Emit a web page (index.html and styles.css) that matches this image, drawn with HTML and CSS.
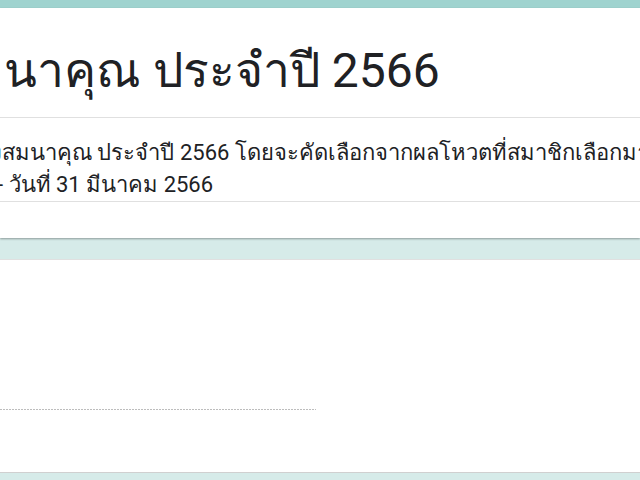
FILE: index.html
```
<!DOCTYPE html>
<html lang="th">
<head>
    <meta charset="UTF-8">
    <meta name="viewport" content="width=device-width, initial-scale=1.0">
    <title>ของสมนาคุณ ประจำปี 2566</title>
    <link rel="stylesheet" href="styles.css">
</head>
<body>
    <div class="top-bar"></div>
    <main class="form">
        <section class="card header-card">
            <h1 class="form-title">สมนาคุณ ประจำปี 2566</h1>
            <div class="form-desc">
                <p class="desc-line desc-line--first">งสมนาคุณ ประจำปี 2566 โดยจะคัดเลือกจากผลโหวตที่สมาชิกเลือกมากที่สุด</p>
                <p class="desc-line desc-line--second">- วันที่ 31 มีนาคม 2566</p>
            </div>
        </section>
        <section class="card question-card">
            <div class="answer-line"></div>
        </section>
    </main>
</body>
</html>
```

FILE: styles.css
```
body {
    margin: 0;
    font-family: Roboto, "Noto Sans", sans-serif;
    background-color: #d6ebe9;
    color: #202124;
    overflow: hidden;
}
.top-bar {
    height: 8px;
    background-color: #9fd3cf;
}
.form {
    display: flex;
    flex-direction: column;
    gap: 21px;
}
.card {
    background-color: white;
}
.header-card {
    height: 230px;
    box-shadow: 0 1px 2px rgba(0, 0, 0, 0.35);
}
.form-title {
    margin: 0;
    padding: 31px 0 14px;
    font-size: 48px;
    font-weight: 400;
    line-height: 64px;
    white-space: nowrap;
    text-indent: -57px;
    border-bottom: 1px solid #e0e0e0;
}
.form-desc {
    padding-top: 19px;
    border-bottom: 1px solid #e0e0e0;
}
.desc-line {
    margin: 0;
    font-size: 22px;
    line-height: 32px;
    white-space: nowrap;
}
.desc-line--first {
    text-indent: -9px;
}
.desc-line--second {
    text-indent: -3px;
}
.question-card {
    height: 214px;
    border-top: 1px solid #e0e0e0;
    border-bottom: 1px solid #d0d0d0;
    display: flex;
    flex-direction: column;
    justify-content: flex-end;
    padding-bottom: 62px;
    box-sizing: border-box;
}
.answer-line {
    width: 316px;
    height: 1px;
    background: repeating-linear-gradient(to right, #bdbdbd 0 2px, transparent 2px 3px);
}
```
